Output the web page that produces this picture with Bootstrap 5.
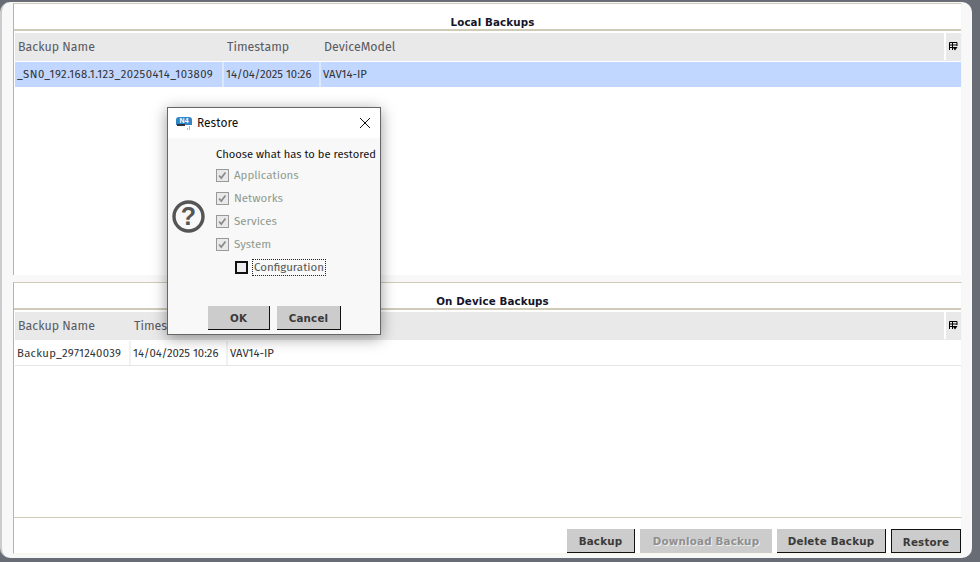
<!DOCTYPE html>
<html lang="en">
<head>
<meta charset="utf-8">
<title>Backups</title>
<link href="https://cdn.jsdelivr.net/npm/bootstrap@5.3.0/dist/css/bootstrap.min.css" rel="stylesheet">
<style>
html,body{height:562px;overflow:hidden}
body{background:#686d75;font-family:"Fira Sans","Noto Sans","Liberation Sans",sans-serif;font-size:12px;color:#333;position:relative}
.frame{height:556px;margin-top:2px;width:972px;background:#f8f8f8;border-left:2px solid #ccc;border-radius:10px;padding:1px 10px 0 11px}
.pane{background:#fff;border-top:1px solid #cfcbb8;border-left:1px solid #b8b5a5;border-right:1px solid #fbf7e8;display:flex;flex-direction:column}
.pane-a{height:272px}
.pane-b{height:235px;margin-top:7px}
.pane-title{height:27px;line-height:36px;padding-left:10px;text-align:center;font-family:"DejaVu Sans",sans-serif;font-weight:700;font-size:10.3px;color:#14142a;border-bottom:2px solid #cfcbb8;letter-spacing:.12px}
.hdr,.rowline{display:flex;margin-left:1px}
.hdr{height:28px;margin-top:2px;background:#e9e9e9;color:#5a5a62;font-size:12.4px;line-height:27px}
.hdr>div{padding-left:3px}
.rowline{height:25px;line-height:24px;font-size:11.3px;margin-top:1px;border-bottom:1px solid #e6e6e6}
.rowline>div{border-right:2px solid #f1f1f1;padding-left:2px;white-space:nowrap}
.sel{background:#c2d7ff;border-bottom:none}
.sel>div{border-right-color:#dce7fb}
.wa{width:209px}.wb{width:97px}
.wc{width:116px}.wd{width:97px}
.spn{letter-spacing:.47px}
.spb{letter-spacing:.29px}
.grow{flex:1 1 0}
.chooser{width:17px;border-left:2px solid #fff;display:flex;align-items:center;justify-content:center;padding:0 1px 0 0!important;margin-bottom:1px}
.toolbar{height:37px;background:#fff;border-top:1px solid #cfcbb8;border-left:1px solid #b8b5a5;border-right:1px solid #fbf7e8;border-bottom:1px solid #fbf7e8;display:flex;justify-content:flex-end;align-items:flex-start;gap:5px;padding:11px 0 0 0}
.gbtn{--bs-btn-border-radius:0;--bs-btn-padding-x:0;--bs-btn-padding-y:0;background:#ccc;border:0;border-right:1px solid #111;border-bottom:1px solid #111;border-radius:0;height:24px;flex:none;font-family:"DejaVu Sans",sans-serif;font-size:10.3px;font-weight:700;color:#3a3a3a;letter-spacing:.2px;line-height:24px}
.gbtn:hover{background:#ccc;color:#3a3a3a}
.gbtn:disabled{background:#ccc;color:#8f8f8f;opacity:1;border:0;text-shadow:1px 1px 0 #eee}
.dflt{border:1px solid #111;line-height:25px}
.w1{width:68px}.w2{width:132px}.w3{width:109px}.w4{width:70px}
.dlg{position:absolute;left:167px;top:107px;width:214px;height:228px;background:#f8f8f8;border:1px solid #666;box-shadow:0 3px 14px rgba(0,0,0,.4);display:flex;flex-direction:column}
.dlg-head{height:30px;background:#fff;display:flex;align-items:center;padding:0 9px 0 8px;gap:5px;color:#111;font-size:12px;flex:none}
.dlg-main{display:flex;height:168px;flex:none}
.dlg-ico{width:48px;padding:62px 0 0 4px;flex:none}
.dlg-list{padding-top:8px;white-space:nowrap}
.dlg-q{color:#111;line-height:17px;font-size:11.2px;margin-bottom:1px}
.chk{display:flex;align-items:center;gap:5px;height:23px;color:#8f9a8f;font-size:11.5px}
.tick{width:13px;height:13px;border:1px solid #999;background:#e9e9e9;display:block;flex:none}
.conf{padding-left:19px;color:#555}
.box{width:13px;height:13px;border:2px solid #111;background:#eee;flex:none}
.dots{border:1px dotted #222;padding:0 1px;line-height:15px;margin-left:-1px}
.dlg-acts{display:flex;gap:7px;padding-left:40px}
.dlg-acts .gbtn{line-height:22px}
.w5{width:62px}.w6{width:64px}
</style>
</head>
<body>
<div class="frame">
  <section class="pane pane-a">
    <div class="pane-title">Local Backups</div>
    <div class="hdr">
      <div class="wa">Backup Name</div><div class="wb">Timestamp</div><div class="grow">DeviceModel</div>
      <div class="chooser"><svg width="9" height="9" viewBox="0 0 9 9"><path d="M.5 8V.5h7.5V4M.5 3h7.5M3.5.5V8M.5 5.5H3" fill="none" stroke="#000"/><path d="M3.5 5h5L6 8.5z" fill="#000"/></svg></div>
    </div>
    <div class="rowline sel"><div class="wa spn">_SN0_192.168.1.123_20250414_103809</div><div class="wb">14/04/2025 10:26</div><div class="grow border-0">VAV14-IP</div></div>
    <div class="grow"></div>
  </section>
  <section class="pane pane-b">
    <div class="pane-title">On Device Backups</div>
    <div class="hdr">
      <div class="wc">Backup Name</div><div class="wd">Timestamp</div><div class="grow">DeviceModel</div>
      <div class="chooser"><svg width="9" height="9" viewBox="0 0 9 9"><path d="M.5 8V.5h7.5V4M.5 3h7.5M3.5.5V8M.5 5.5H3" fill="none" stroke="#000"/><path d="M3.5 5h5L6 8.5z" fill="#000"/></svg></div>
    </div>
    <div class="rowline"><div class="wc spb">Backup_2971240039</div><div class="wd">14/04/2025 10:26</div><div class="grow border-0">VAV14-IP</div></div>
    <div class="grow"></div>
  </section>
  <div class="toolbar">
    <button class="btn gbtn w1">Backup</button>
    <button class="btn gbtn w2" disabled>Download Backup</button>
    <button class="btn gbtn w3">Delete Backup</button>
    <button class="btn gbtn dflt w4">Restore</button>
  </div>
</div>
<div class="dlg" role="dialog">
  <div class="dlg-head">
    <svg width="16" height="16" viewBox="0 0 16 16"><path d="M0 5a3 3 0 0 1 3-3h10a3 3 0 0 1 3 3v5H0z" fill="#2f86c9"/><rect x="1" y="9" width="8" height="2" fill="#333"/><path d="M11 14h1M13 14h1M13 12h1" stroke="#2f86c9"/><text x="3.6" y="8" font-size="7" font-weight="700" fill="#fff" font-family="Liberation Sans">N4</text></svg>
    <span class="flex-grow-1">Restore</span>
    <svg width="12" height="12" viewBox="0 0 12 12"><path d="M1 1l10 10M11 1L1 11" stroke="#111" fill="none"/></svg>
  </div>
  <div class="dlg-main">
    <div class="dlg-ico"><svg width="33" height="33" viewBox="0 0 33 33"><circle cx="16.5" cy="16.5" r="14.5" fill="none" stroke="#555" stroke-width="3.4"/><text x="16.5" y="25" text-anchor="middle" font-size="25" font-weight="700" fill="#555" font-family="Liberation Sans">?</text></svg></div>
    <div class="dlg-list">
      <div class="dlg-q">Choose what has to be restored</div>
      <div class="chk"><svg class="tick" viewBox="0 0 13 13"><path d="M2.5 6.5l2.5 3 5-6.5" fill="none" stroke="#8a8a8a" stroke-width="2"/></svg>Applications</div>
      <div class="chk"><svg class="tick" viewBox="0 0 13 13"><path d="M2.5 6.5l2.5 3 5-6.5" fill="none" stroke="#8a8a8a" stroke-width="2"/></svg>Networks</div>
      <div class="chk"><svg class="tick" viewBox="0 0 13 13"><path d="M2.5 6.5l2.5 3 5-6.5" fill="none" stroke="#8a8a8a" stroke-width="2"/></svg>Services</div>
      <div class="chk"><svg class="tick" viewBox="0 0 13 13"><path d="M2.5 6.5l2.5 3 5-6.5" fill="none" stroke="#8a8a8a" stroke-width="2"/></svg>System</div>
      <div class="chk conf"><span class="box"></span><span class="dots">Configuration</span></div>
    </div>
  </div>
  <div class="dlg-acts">
    <button class="btn gbtn w5">OK</button>
    <button class="btn gbtn w6">Cancel</button>
  </div>
</div>
<script src="https://cdn.jsdelivr.net/npm/bootstrap@5.3.0/dist/js/bootstrap.bundle.min.js"></script>
</body>
</html>
